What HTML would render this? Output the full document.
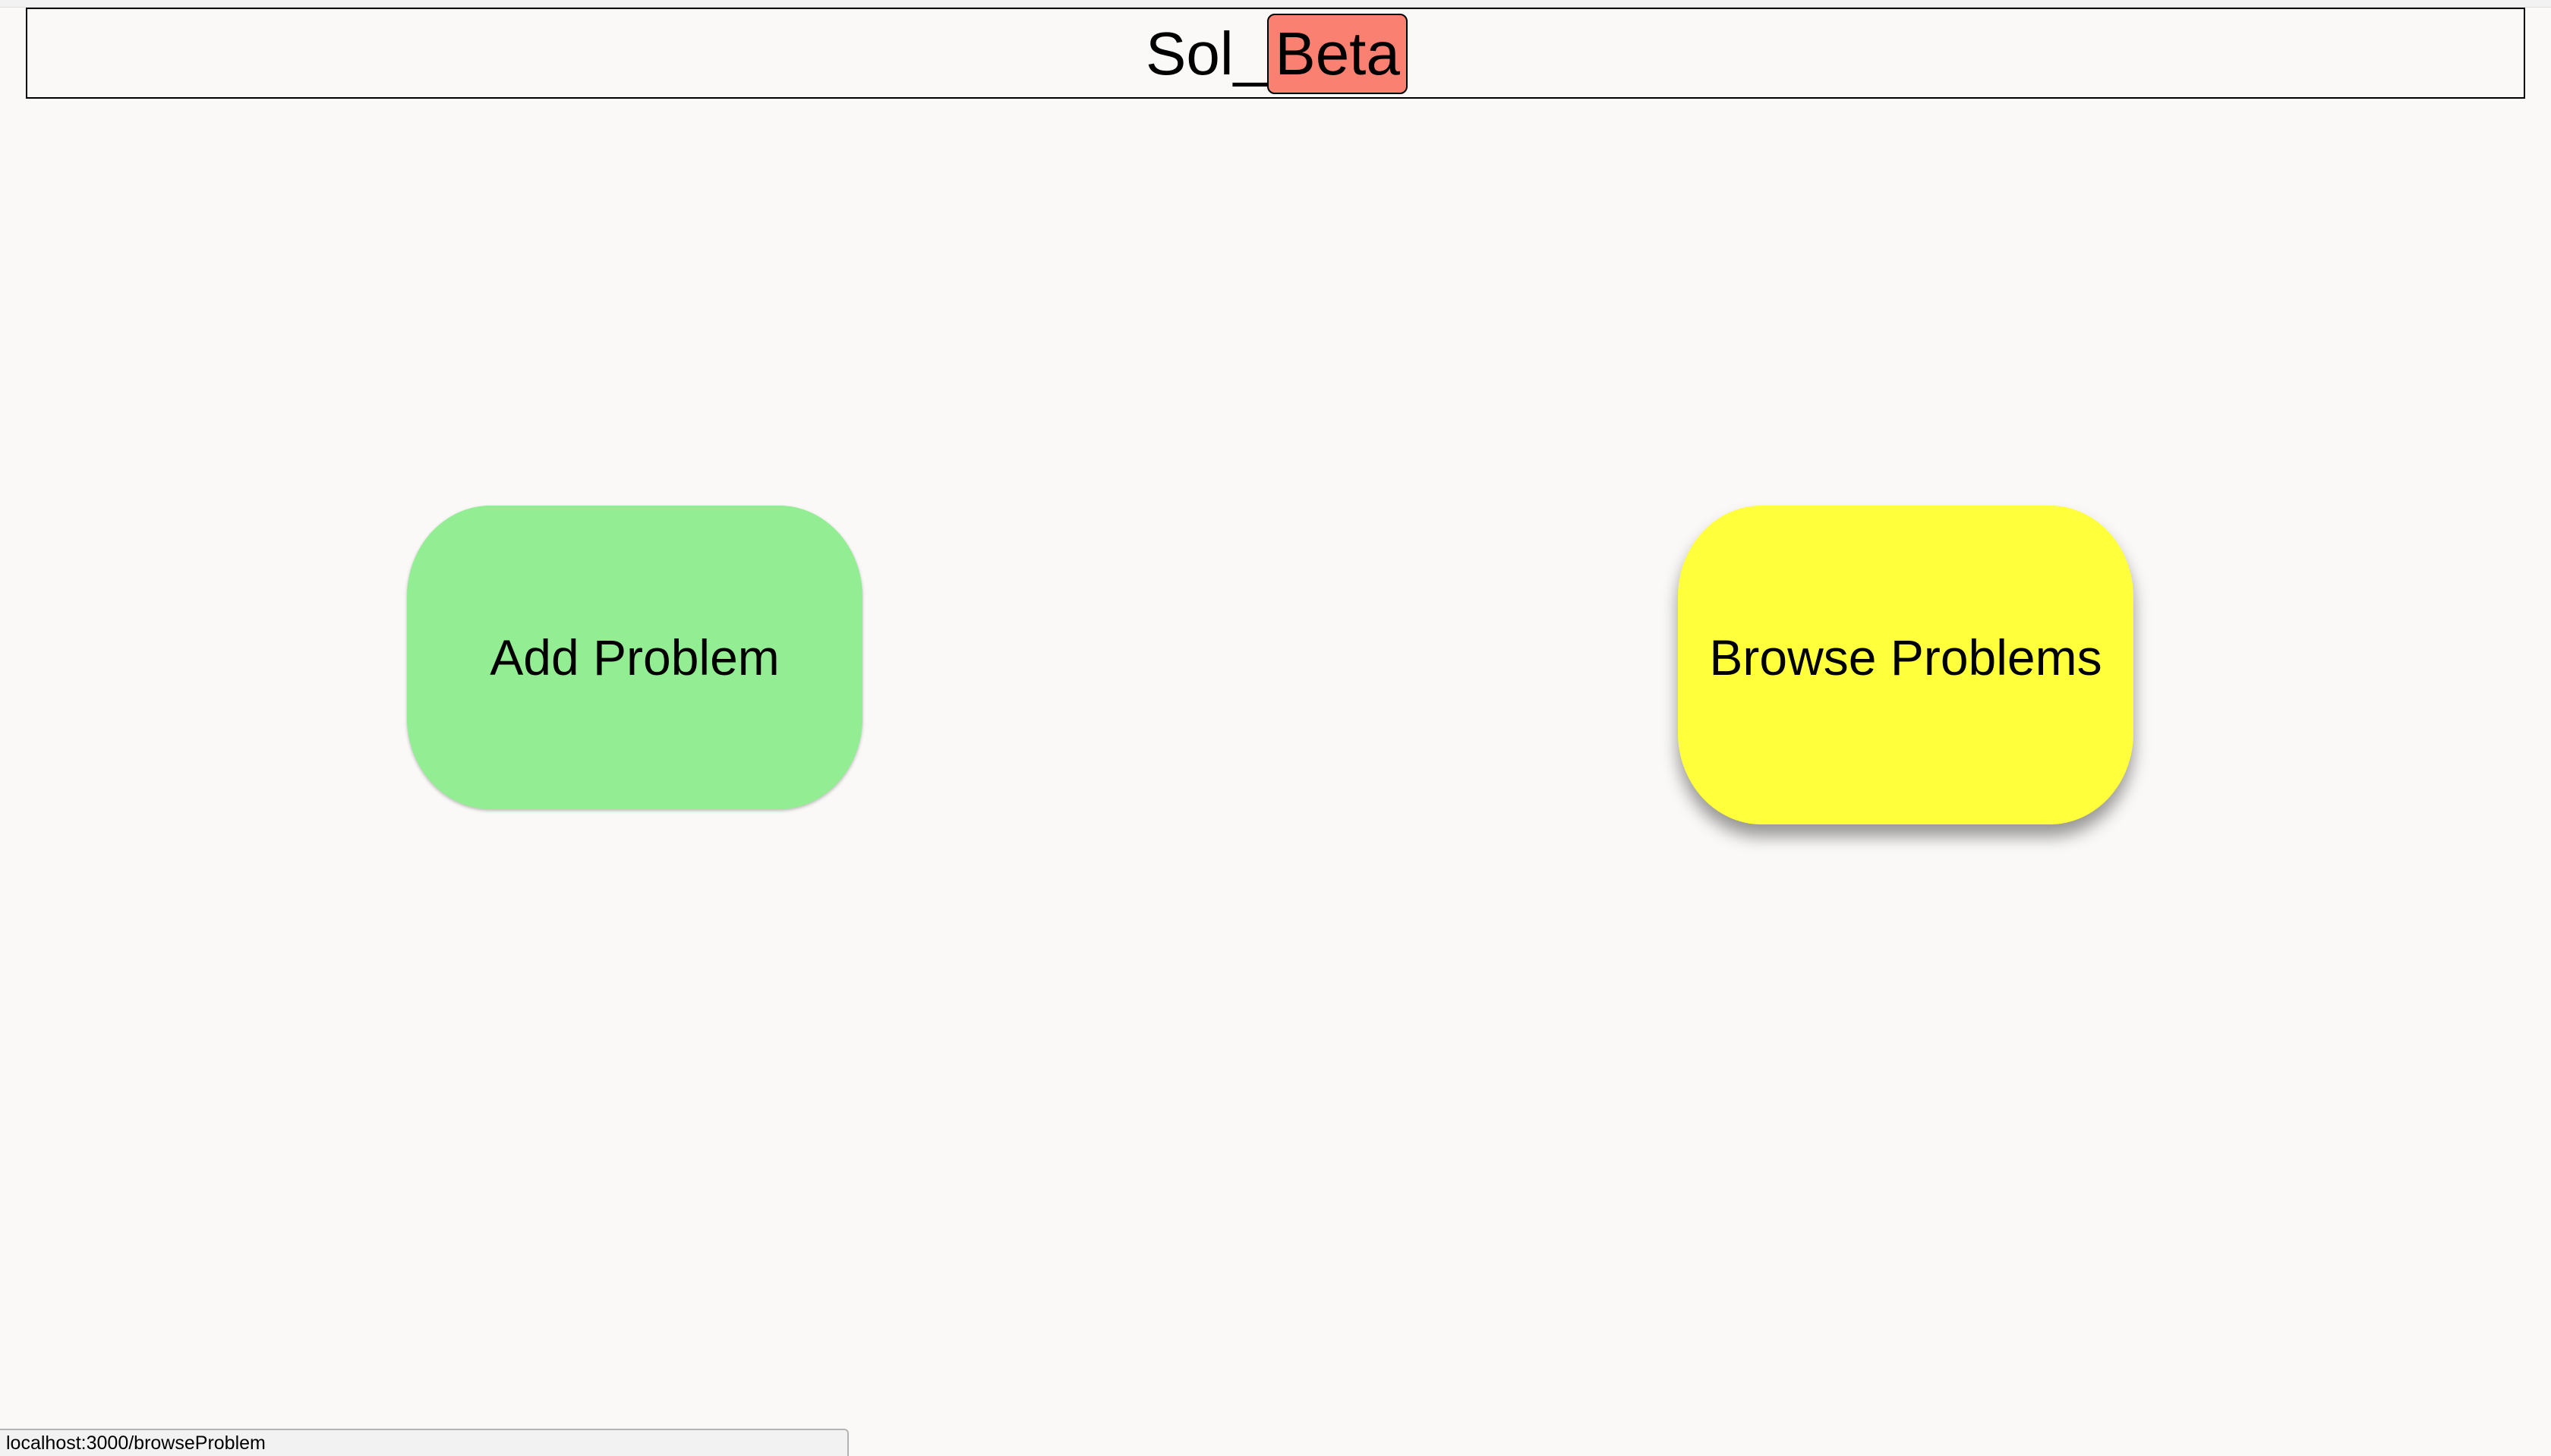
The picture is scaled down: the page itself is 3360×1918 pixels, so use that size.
<!DOCTYPE html>
<html><head><meta charset="utf-8"><style>
html,body{margin:0;padding:0;}
body{width:3360px;height:1918px;background:#faf9f7;position:relative;overflow:hidden;font-family:"Liberation Sans",sans-serif;color:#000;}
.top{position:absolute;left:0;top:0;width:3360px;height:9px;background:#f2f2f2;border-bottom:1px solid #dcdcdc;}
.hdr{position:absolute;left:34px;top:10px;width:3288px;height:116px;border:2px solid #000;box-sizing:content-box;}
.title{position:absolute;left:1509px;top:17px;height:108px;display:flex;align-items:center;font-size:80px;line-height:1;}
.beta{background:#fa8072;border:2px solid #000;border-radius:10px;height:106px;width:185px;box-sizing:border-box;display:flex;align-items:center;justify-content:center;margin-left:0;}
.btn{position:absolute;width:600px;display:flex;align-items:center;justify-content:center;font-size:66px;border-radius:110px/120px;box-sizing:border-box;}
.g{left:536px;top:666px;height:400px;background:#93ee93;box-shadow:0 2px 4px rgba(0,0,0,0.25);}
.y{left:2210px;top:666px;height:420px;padding-bottom:20px;background:#ffff3b;box-shadow:0 16px 22px rgba(0,0,0,0.4);}
.status{position:absolute;left:0;top:1882px;width:1118px;height:36px;background:#f2f2f2;border:2px solid #b4b4b4;border-bottom:none;border-left:none;border-radius:0 6px 0 0;box-sizing:border-box;font-size:25px;line-height:34px;padding-left:8px;}
</style></head><body>
<div class="top"></div>
<div class="hdr"></div>
<div class="title"><span>Sol_</span><span class="beta">Beta</span></div>
<div class="btn g">Add Problem</div>
<div class="btn y">Browse Problems</div>
<div class="status">localhost:3000/browseProblem</div>
</body></html>
